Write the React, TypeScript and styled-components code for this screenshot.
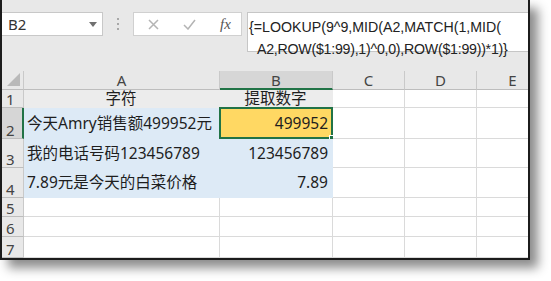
import React from 'react';
import styled, { createGlobalStyle } from 'styled-components';

const Global = createGlobalStyle`
  html, body { margin: 0; padding: 0; background: #ffffff; }
  body {
    width: 551px; height: 281px; overflow: hidden;
    font-family: "Noto Sans", "Noto Sans CJK SC", sans-serif;
  }
`;

const Win = styled.div`
  width: 530px;
  height: 260px;
  box-sizing: border-box;
  border: 2px solid #1c1c1c;
  border-top: none;
  background: #e8e8e8;
  box-shadow: 8px 8px 10px rgba(0, 0, 0, 0.45);
  display: flex;
  flex-direction: column;
  overflow: hidden;
`;

const Toolbar = styled.div`
  height: 71px;
  flex: none;
  box-sizing: border-box;
  padding-top: 12px;
  display: flex;
  align-items: flex-start;
`;

const NameBox = styled.div`
  width: 101px;
  height: 24px;
  box-sizing: border-box;
  background: #fff;
  border: 1px solid #c8c8c8;
  border-left: none;
  display: flex;
  align-items: center;
  justify-content: space-between;
  padding: 0 5px 0 6px;
  font-size: 15px;
  color: #333;
`;

const Grip = styled.div`
  width: 30px;
  height: 24px;
  display: flex;
  flex-direction: column;
  align-items: center;
  justify-content: center;
  gap: 3px;
`;

const Dot = styled.span`
  width: 2px;
  height: 2px;
  background: #a8a8a8;
`;

const FxGroup = styled.div`
  width: 109px;
  height: 24px;
  box-sizing: border-box;
  background: #fff;
  border: 1px solid #d0d0d0;
  display: flex;
  align-items: center;
  padding: 0 0 0 14px;
  gap: 24px;
`;

const FxLabel = styled.span`
  font-family: "Liberation Serif", "DejaVu Serif", serif;
  font-style: italic;
  font-size: 15px;
  color: #555;
`;

const FormulaBox = styled.div`
  flex: 1;
  margin-left: 5px;
  height: 40px;
  box-sizing: border-box;
  background: #fff;
  border: 1px solid #c6c6c6;
  border-right: none;
  font-family: "Liberation Sans", Arial, sans-serif;
  font-size: 14.2px;
  color: #222;
  line-height: 22px;
  padding-top: 3px;
`;

const FormulaLine = styled.div<{ $indent: number; $tight?: boolean }>`
  padding-left: ${(p) => p.$indent}px;
  letter-spacing: ${(p) => (p.$tight ? '-0.25px' : '0')};
  white-space: nowrap;
`;

const Sheet = styled.div`
  flex: 1;
  display: grid;
  grid-template-columns: 22px 196px 113px 72px 72px 72px;
  grid-template-rows: 19px 18px 31px 29px 30px 19px 20px 21px;
  background: #fff;
  overflow: hidden;
`;

const Head = styled.div<{ $active?: boolean; $row?: boolean }>`
  box-sizing: border-box;
  background: ${(p) => (p.$active ? '#d6d6d6' : '#e8e8e8')};
  border-right: ${(p) => (p.$active && p.$row ? '2px solid #217346' : '1px solid #c9c9c9')};
  border-bottom: ${(p) => (p.$active && !p.$row ? '2px solid #217346' : '1px solid #bdbdbd')};
  display: flex;
  align-items: ${(p) => (p.$row ? 'flex-end' : 'center')};
  justify-content: ${(p) => (p.$row ? 'flex-start' : 'center')};
  padding-left: ${(p) => (p.$row ? '4px' : '0')};
  padding-top: ${(p) => (p.$row ? '0' : '1px')};
  font-size: 15px;
  line-height: 15px;
  color: #444;
  position: relative;
  overflow: hidden;
`;

const Corner = styled(Head)`
  &::after {
    content: '';
    position: absolute;
    right: 3px;
    bottom: 3px;
    width: 0;
    height: 0;
    border-left: 13px solid transparent;
    border-bottom: 13px solid #b9b9b9;
  }
`;

const Cell = styled.div<{ $fill?: string; $align?: string; $selected?: boolean }>`
  box-sizing: border-box;
  background: ${(p) => p.$fill || '#fff'};
  border-right: 1px solid ${(p) => (p.$fill ? 'transparent' : '#dadada')};
  border-bottom: 1px solid ${(p) => (p.$fill ? 'transparent' : '#dadada')};
  display: flex;
  align-items: center;
  justify-content: ${(p) => p.$align || 'flex-start'};
  padding: 0 4px 0 3px;
  font-size: 15.5px;
  line-height: 17px;
  color: #1e1e1e;
  white-space: nowrap;
  position: relative;
  ${(p) =>
    p.$selected
      ? `
    &::before {
      content: '';
      position: absolute;
      left: -1px; top: -1px; right: -1px; bottom: -1px;
      border: 2px solid #217346;
    }
    &::after {
      content: '';
      position: absolute;
      right: -4px; bottom: -4px;
      width: 5px; height: 5px;
      background: #217346;
      border: 1px solid #fff;
    }
  `
      : ''}
`;

const cols = ['A', 'B', 'C', 'D', 'E'];

type Row = { n: number; a?: string; b?: string; kind?: 'title' | 'data' };

const rows: Row[] = [
  { n: 1, a: '字符', b: '提取数字', kind: 'title' },
  { n: 2, a: '今天Amry销售额499952元', b: '499952', kind: 'data' },
  { n: 3, a: '我的电话号码123456789', b: '123456789', kind: 'data' },
  { n: 4, a: '7.89元是今天的白菜价格', b: '7.89', kind: 'data' },
  { n: 5 },
  { n: 6 },
  { n: 7 },
];

const TITLE_FILL = '#ececec';
const DATA_FILL = '#ddeaf6';
const SEL_FILL = '#ffd863';

export default function App() {
  return (
    <>
      <Global />
      <Win>
        <Toolbar>
          <NameBox>
            <span>B2</span>
            <svg width="8" height="5" viewBox="0 0 8 5">
              <path d="M0 0 L8 0 L4 5 Z" fill="#707070" />
            </svg>
          </NameBox>
          <Grip>
            <Dot />
            <Dot />
            <Dot />
          </Grip>
          <FxGroup>
            <svg width="11" height="11" viewBox="0 0 11 11">
              <path d="M1 1 L10 10 M10 1 L1 10" stroke="#b4b4b4" strokeWidth="1.5" fill="none" />
            </svg>
            <svg width="13" height="11" viewBox="0 0 13 11">
              <path d="M1 6 L5 10 L12 1" stroke="#b4b4b4" strokeWidth="1.5" fill="none" />
            </svg>
            <FxLabel>fx</FxLabel>
          </FxGroup>
          <FormulaBox>
            <FormulaLine $indent={1}>{'{=LOOKUP(9^9,MID(A2,MATCH(1,MID('}</FormulaLine>
            <FormulaLine $indent={9} $tight>
              {'A2,ROW($1:99),1)^0,0),ROW($1:99))*1)}'}
            </FormulaLine>
          </FormulaBox>
        </Toolbar>
        <Sheet>
          <Corner />
          {cols.map((c) => (
            <Head key={c} $active={c === 'B'}>
              {c}
            </Head>
          ))}
          {rows.map((r) => {
            const fill = r.kind === 'title' ? TITLE_FILL : r.kind === 'data' ? DATA_FILL : undefined;
            return (
              <React.Fragment key={r.n}>
                <Head $row $active={r.n === 2}>
                  {r.n}
                </Head>
                <Cell $fill={fill} $align={r.kind === 'title' ? 'center' : 'flex-start'}>
                  {r.a}
                </Cell>
                <Cell
                  $fill={r.n === 2 ? SEL_FILL : fill}
                  $align={r.kind === 'title' ? 'center' : 'flex-end'}
                  $selected={r.n === 2}
                >
                  {r.b}
                </Cell>
                <Cell />
                <Cell />
                <Cell />
              </React.Fragment>
            );
          })}
        </Sheet>
      </Win>
    </>
  );
}
